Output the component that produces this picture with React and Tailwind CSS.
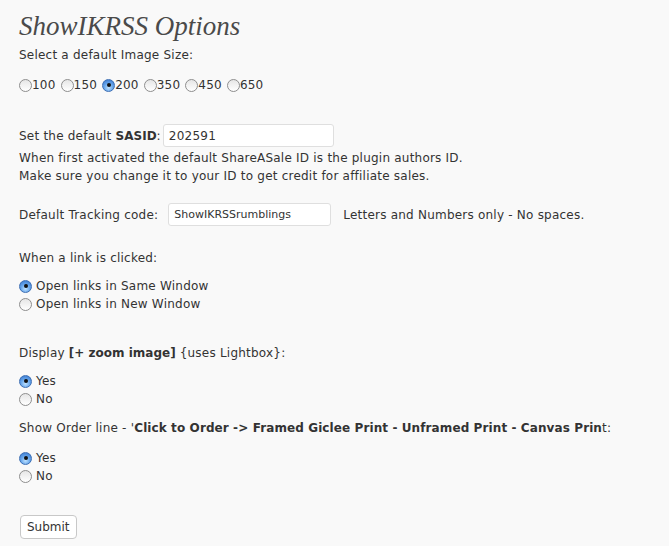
import React, { useState } from 'react';

const Radio = ({ checked, onClick }) => (
  <span
    onClick={onClick}
    className={
      'inline-flex items-center justify-center w-[13px] h-[13px] rounded-full border shrink-0 ' +
      (checked
        ? 'border-[#3d6fb4] bg-[radial-gradient(circle_at_50%_70%,#bfe2ff_0%,#6aa8ec_45%,#2f6fc9_100%)]'
        : 'border-[#8e8e8e] bg-[linear-gradient(#e6e6e6,#ffffff)]')
    }
  >
    {checked && <span className="block w-[4px] h-[4px] rounded-full bg-[#111]" />}
  </span>
);

const sizes = ['100', '150', '200', '350', '450', '650'];

const App = () => {
  const [size, setSize] = useState('200');
  const [sasid, setSasid] = useState('202591');
  const [tracking, setTracking] = useState('ShowIKRSSrumblings');
  const [target, setTarget] = useState('same');
  const [zoom, setZoom] = useState('yes');
  const [order, setOrder] = useState('yes');

  return (
    <div className="min-h-[546px] bg-[#f9f9f9] text-[#333] text-[12px] leading-[18px] tracking-[0.22px] font-['DejaVu_Sans',sans-serif] pl-[19px] pt-[10px]">
      <h2 className="font-['Liberation_Serif',Georgia,serif] italic text-[27px] leading-[32px] tracking-normal text-[#4a4a4a]">ShowIKRSS Options</h2>

      <p className="mt-[4px]">Select a default Image Size:</p>
      <div className="flex items-center mt-[12px]">
        {sizes.map(s => (
          <label key={s} className="flex items-center mr-[5px]" onClick={() => setSize(s)}>
            <Radio checked={size === s} />
            <span>{s}</span>
          </label>
        ))}
      </div>

      <div className="flex items-center mt-[30px]">
        <span>Set the default <b className="tracking-normal">SASID</b>:</span>
        <input
          value={sasid}
          onChange={e => setSasid(e.target.value)}
          className="ml-[2px] w-[171px] h-[23px] px-[5px] bg-white border border-[#dfdfdf] rounded-[3px] outline-none text-[#333]"
        />
      </div>
      <p className="mt-[2px]">When first activated the default ShareASale ID is the plugin authors ID.</p>
      <p>Make sure you change it to your ID to get credit for affiliate sales.</p>

      <div className="flex items-center mt-[18px]">
        <span>Default Tracking code:</span>
        <input
          value={tracking}
          onChange={e => setTracking(e.target.value)}
          className="ml-[10px] w-[163px] h-[23px] px-[5px] bg-white border border-[#dfdfdf] rounded-[3px] outline-none text-[#333] text-[11px] tracking-normal"
        />
        <span className="ml-[12px]">Letters and Numbers only - No spaces.</span>
      </div>

      <p className="mt-[23px]">When a link is clicked:</p>
      <div className="mt-[10px]">
        <label className="flex items-center gap-[4px]" onClick={() => setTarget('same')}>
          <Radio checked={target === 'same'} /> Open links in Same Window
        </label>
        <label className="flex items-center gap-[4px]" onClick={() => setTarget('new')}>
          <Radio checked={target === 'new'} /> Open links in New Window
        </label>
      </div>

      <p className="mt-[31px]">Display <b className="tracking-normal">[+ zoom image]</b> {'{uses Lightbox}'}:</p>
      <div className="mt-[10px]">
        <label className="flex items-center gap-[4px]" onClick={() => setZoom('yes')}>
          <Radio checked={zoom === 'yes'} /> Yes
        </label>
        <label className="flex items-center gap-[4px]" onClick={() => setZoom('no')}>
          <Radio checked={zoom === 'no'} /> No
        </label>
      </div>

      <p className="mt-[11px]">Show Order line - '<b className="tracking-[0.1px]">Click to Order -&gt; Framed Giclee Print - Unframed Print - Canvas Prin</b>t:</p>
      <div className="mt-[12px]">
        <label className="flex items-center gap-[4px]" onClick={() => setOrder('yes')}>
          <Radio checked={order === 'yes'} /> Yes
        </label>
        <label className="flex items-center gap-[4px]" onClick={() => setOrder('no')}>
          <Radio checked={order === 'no'} /> No
        </label>
      </div>

      <button className="mt-[30px] ml-[1px] h-[24px] px-[6px] bg-white border border-[#c8c8c8] rounded-[4px] text-[#333] text-[12px] tracking-normal">
        Submit
      </button>
    </div>
  );
};

export default App;
